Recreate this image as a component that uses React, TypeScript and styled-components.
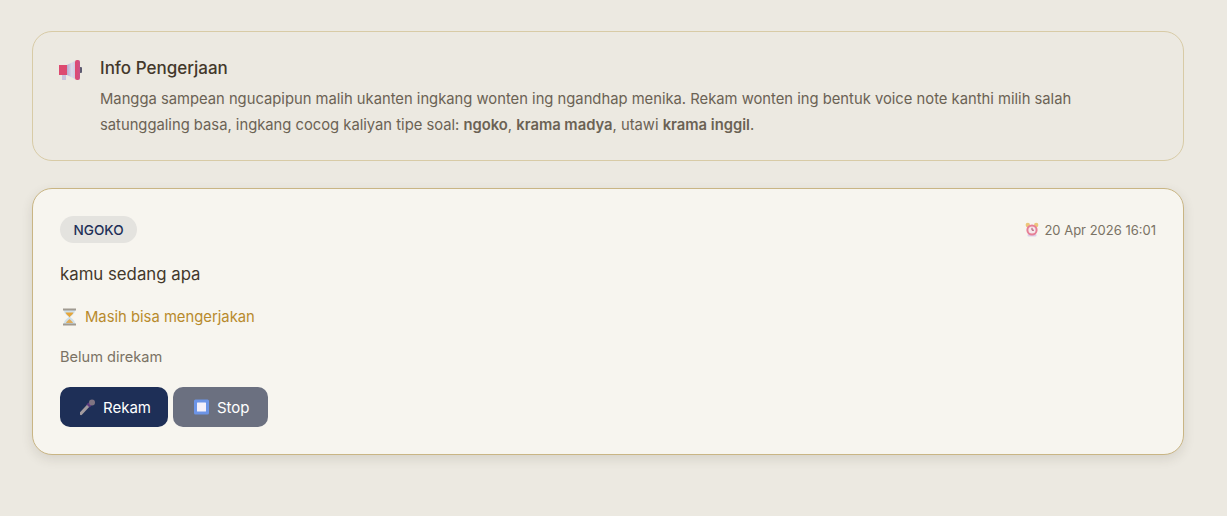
import React from "react";
import styled, { createGlobalStyle } from "styled-components";

const Global = createGlobalStyle`
  html, body { margin: 0; padding: 0; background: #ece9e1; }
  body { font-family: "Inter", "Noto Sans", sans-serif; }
`;

const Page = styled.main`
  box-sizing: border-box;
  height: 516px;
  overflow: hidden;
  padding: 31px 43px 0 32px;
  display: flex;
  flex-direction: column;
  gap: 27px;
`;

const InfoCard = styled.section`
  box-sizing: border-box;
  height: 130px;
  border: 1px solid #d8cba6;
  border-radius: 20px;
  padding: 24px 26px;
  display: flex;
  gap: 18px;
`;

const InfoIcon = styled.div`
  width: 23px;
  height: 24px;
  flex: none;
  margin-top: 2px;
`;

const InfoBody = styled.div`
  display: flex;
  flex-direction: column;
`;

const InfoTitle = styled.h2`
  margin: 0 0 6px;
  font-size: 17px;
  font-weight: 500;
  line-height: 24px;
  color: #43382b;
`;

const InfoText = styled.p`
  margin: 0;
  max-width: 1030px;
  font-size: 14.78px;
  line-height: 26px;
  color: #6b6254;
  strong { font-weight: 600; }
`;

const TaskCard = styled.section`
  box-sizing: border-box;
  height: 267px;
  background: #f7f5ef;
  border: 1px solid #c9b584;
  border-radius: 20px;
  padding: 27px;
  box-shadow: 0 4px 12px rgba(60, 50, 30, 0.12);
  display: flex;
  flex-direction: column;
  align-items: flex-start;
`;

const TaskHeader = styled.div`
  width: 100%;
  display: flex;
  justify-content: space-between;
  align-items: center;
  height: 27px;
`;

const Badge = styled.span`
  background: #e4e3df;
  color: #1e2f57;
  border-radius: 14px;
  height: 27px;
  padding: 0 13.5px;
  display: inline-flex;
  align-items: center;
  font-size: 13.6px;
  font-weight: 500;
`;

const Stamp = styled.span`
  display: inline-flex;
  align-items: center;
  gap: 5px;
  font-size: 13px;
  color: #7a7264;
`;

const Question = styled.p`
  margin: 21px 0 0;
  font-size: 16.8px;
  line-height: 20px;
  font-weight: 400;
  color: #43382b;
`;

const Status = styled.div`
  margin-top: 22px;
  display: flex;
  align-items: center;
  gap: 6px;
  font-size: 14.8px;
  line-height: 22px;
  font-weight: 400;
  color: #b88a2c;
`;

const Note = styled.p`
  margin: 18px 0 0;
  font-size: 14.6px;
  line-height: 22px;
  color: #7a7264;
`;

const Actions = styled.div`
  margin-top: 19px;
  display: flex;
  gap: 5px;
`;

const Button = styled.button<{ $tone: "navy" | "slate" }>`
  height: 40px;
  padding: 0 ${(p) => (p.$tone === "navy" ? "17px" : "18px")} 0 20px;
  border: 0;
  border-radius: 10px;
  display: inline-flex;
  align-items: center;
  gap: 7px;
  font-family: inherit;
  font-size: 15px;
  font-weight: 400;
  color: #fff;
  background: ${(p) => (p.$tone === "navy" ? "#1e2f57" : "#6b7080")};
`;

const Megaphone = () => (
  <svg width="23" height="24" viewBox="0 0 23 24">
    <defs>
      <linearGradient id="cone" x1="0" x2="1" y1="0" y2="0">
        <stop offset="0" stopColor="#b4aed2" />
        <stop offset="0.6" stopColor="#dcd8ea" />
        <stop offset="1" stopColor="#cfcae2" />
      </linearGradient>
      <linearGradient id="bell" x1="0" x2="1" y1="0" y2="0">
        <stop offset="0" stopColor="#e2456c" />
        <stop offset="1" stopColor="#c9508c" />
      </linearGradient>
    </defs>
    <rect x="3" y="16" width="4" height="6" fill="#c9c3dd" />
    <path d="M8 7 L16 3 V21 L8 17Z" fill="url(#cone)" />
    <rect x="20.5" y="9" width="2.5" height="6" rx="1" fill="#5d5a70" />
    <rect x="0" y="7" width="8" height="10" fill="#dd4a70" />
    <rect x="16" y="2" width="5" height="20" rx="2" fill="url(#bell)" />
  </svg>
);

const Hourglass = () => (
  <svg width="19" height="18" viewBox="0 0 19 18">
    <path d="M4 2 H15 C15 7 10.5 7.5 10.5 9 C10.5 10.5 15 11 15 16 H4 C4 11 8.5 10.5 8.5 9 C8.5 7.5 4 7 4 2Z" fill="#cfe0ea" />
    <path d="M5.5 4.5 H13.5 C12.8 7 10 7.6 9.5 9.5 C9 7.6 6.2 7 5.5 4.5Z" fill="#e6a63a" />
    <path d="M6 15 C6.5 12.8 8.7 12.3 9.5 11 C10.3 12.3 12.5 12.8 13 15Z" fill="#e0ac58" />
    <rect x="3" y="0.5" width="13" height="2" fill="#a09a90" />
    <rect x="3" y="15.5" width="13" height="2" fill="#a09a90" />
  </svg>
);

const Mic = () => (
  <svg width="16" height="18" viewBox="0 0 16 18">
    <path d="M1 15.5 L8 8" stroke="#a39b9f" strokeWidth="3.2" strokeLinecap="round" fill="none" />
    <path d="M8 8 L10 6" stroke="#5f3a80" strokeWidth="4.4" fill="none" />
    <circle cx="12" cy="4.4" r="3" fill="#7f7482" />
  </svg>
);

const StopIcon = () => (
  <svg width="17" height="16" viewBox="0 0 17 16">
    <rect x="1" y="0.5" width="15" height="15" rx="1.5" fill="#6c94e6" />
    <rect x="4" y="3.5" width="9" height="9" rx="0.5" fill="#f4f0fa" />
  </svg>
);

const Clock = () => (
  <svg width="14" height="15" viewBox="0 0 14 15">
    <circle cx="2.8" cy="3" r="2.2" fill="#ecc67a" />
    <circle cx="11.2" cy="3" r="2.2" fill="#ecc67a" />
    <rect x="2.5" y="12" width="9" height="2.5" rx="1" fill="#dcd0ea" />
    <circle cx="7" cy="8" r="5.6" fill="#e77f96" />
    <circle cx="7" cy="8" r="3.6" fill="#f5e7ea" />
    <path d="M7 5.8 V8.2 H9" stroke="#a8506a" strokeWidth="1" fill="none" />
  </svg>
);

export default function App() {
  return (
    <>
      <Global />
      <Page>
        <InfoCard>
          <InfoIcon>
            <Megaphone />
          </InfoIcon>
          <InfoBody>
            <InfoTitle>Info Pengerjaan</InfoTitle>
            <InfoText>
              Mangga sampean ngucapipun malih ukanten ingkang wonten ing ngandhap menika. Rekam wonten ing bentuk voice note kanthi milih salah satunggaling basa, ingkang cocog kaliyan tipe soal: <strong>ngoko</strong>, <strong>krama madya</strong>, utawi <strong>krama inggil</strong>.
            </InfoText>
          </InfoBody>
        </InfoCard>
        <TaskCard>
          <TaskHeader>
            <Badge>NGOKO</Badge>
            <Stamp>
              <Clock />
              20 Apr 2026 16:01
            </Stamp>
          </TaskHeader>
          <Question>kamu sedang apa</Question>
          <Status>
            <Hourglass />
            Masih bisa mengerjakan
          </Status>
          <Note>Belum direkam</Note>
          <Actions>
            <Button $tone="navy">
              <Mic />
              Rekam
            </Button>
            <Button $tone="slate">
              <StopIcon />
              Stop
            </Button>
          </Actions>
        </TaskCard>
      </Page>
    </>
  );
}
